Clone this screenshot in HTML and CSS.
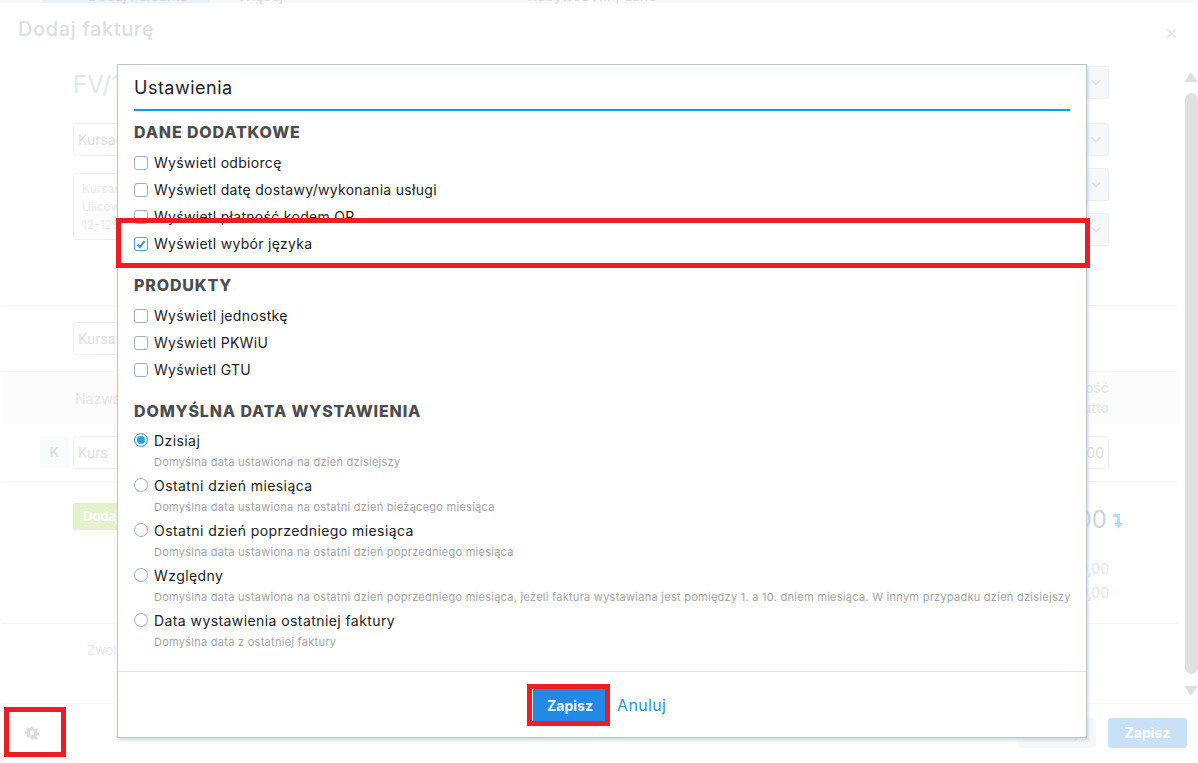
FILE: index.html
```html
<!DOCTYPE html>
<html lang="pl">

<head>
    <meta charset="UTF-8">
    <meta name="viewport" content="width=device-width, initial-scale=1.0">
    <title>Dodaj fakturę</title>
    <link rel="stylesheet" href="styles.css">
</head>

<body>
    <!-- wyszarzona strona pod oknem ustawien -->
    <div class="topbar">
        <span class="top-chip">Dodaj kursanta</span>
        <span class="top-more">Więcej</span>
        <span class="top-buyer">Nabywca NIP, dane</span>
    </div>
    <div class="sheet">
        <div class="sheet-head">
            <h1 class="sheet-title">Dodaj fakturę</h1>
            <span class="sheet-close">×</span>
        </div>
        <div class="sheet-main">
            <div class="scroll-area">
                <div class="row row-number">
                    <span class="invoice-no">FV/1</span>
                    <span class="select"><svg class="chevron" viewBox="0 0 12 8"><path d="M1 1.500l5 5 5-5"/></svg></span>
                </div>
                <div class="row row-seller">
                    <span class="input">Kursant</span>
                    <span class="select"><svg class="chevron" viewBox="0 0 12 8"><path d="M1 1.500l5 5 5-5"/></svg></span>
                </div>
                <div class="row row-address">
                    <div class="address">Kursant<br>Ulicowa<br>12-128</div>
                    <div class="select-stack">
                        <span class="select"><svg class="chevron" viewBox="0 0 12 8"><path d="M1 1.500l5 5 5-5"/></svg></span>
                        <span class="select"><svg class="chevron" viewBox="0 0 12 8"><path d="M1 1.500l5 5 5-5"/></svg></span>
                    </div>
                </div>
                <div class="row row-course">
                    <span class="input">Kursant</span>
                </div>
                <div class="band">
                    <span class="band-name">Nazwa</span>
                    <span class="band-value">Wartość<br>brutto</span>
                </div>
                <div class="row row-item">
                    <div class="item-left">
                        <span class="item-key">K</span>
                        <span class="input input-short">Kurs</span>
                    </div>
                    <span class="input input-amount">0,00</span>
                </div>
                <div class="row row-sum">
                    <span class="add-btn">Dodaj</span>
                    <div class="sum">
                        <div class="sum-total">0,00
                            <svg class="sum-arrow" viewBox="0 0 12 16"><path d="M1 1h7v9h3.500L6.500 15.500 1.500 10H5V4H1z"/></svg>
                        </div>
                        <div class="sum-line">0,00</div>
                        <div class="sum-line">0,00</div>
                    </div>
                </div>
                <div class="row-note">Zwolnienie</div>
            </div>
            <div class="scrollbar">
                <span class="arrow-up"></span>
                <span class="thumb"></span>
                <span class="arrow-down"></span>
            </div>
        </div>
        <div class="sheet-foot">
            <svg class="gear" viewBox="0 0 24 24"><path fill-rule="evenodd" d="M10 1h4l.7 3.300 1.900.8 2.900-1.800 2.800 2.800-1.800 2.900.8 1.900 3.300.7v4l-3.300.7-.8 1.900 1.800 2.900-2.800 2.800-2.900-1.800-1.900.8L14 23h-4l-.7-3.300-1.900-.8-2.900 1.800-2.800-2.800 1.800-2.900-.8-1.900L-.6 14v-4l3.300-.7.8-1.900-1.800-2.900 2.800-2.800 2.900 1.800 1.900-.8zM12 8a4 4 0 1 0 0 8 4 4 0 0 0 0-8z"/></svg>
            <span class="foot-ghost">Anuluj</span>
            <span class="foot-save">Zapisz</span>
        </div>
    </div>

    <!-- okno ustawien -->
    <div class="dialog">
        <div class="dialog-body">
            <h2 class="dialog-title">Ustawienia</h2>

            <h3 class="group">DANE DODATKOWE</h3>
            <label class="check"><span class="box"></span>Wyświetl odbiorcę</label>
            <label class="check"><span class="box"></span>Wyświetl datę dostawy/wykonania usługi</label>
            <label class="check"><span class="box"></span>Wyświetl płatność kodem QR</label>
            <label class="check"><span class="box box-on"><svg viewBox="0 0 14 14"><path d="M3 7.500l3 3 5-7"/></svg></span>Wyświetl wybór języka</label>

            <h3 class="group group-next">PRODUKTY</h3>
            <label class="check"><span class="box"></span>Wyświetl jednostkę</label>
            <label class="check"><span class="box"></span>Wyświetl PKWiU</label>
            <label class="check"><span class="box"></span>Wyświetl GTU</label>

            <h3 class="group group-next">DOMYŚLNA DATA WYSTAWIENIA</h3>
            <div class="radios">
                <div class="radio-item">
                    <label class="radio"><span class="dot dot-on"></span>Dzisiaj</label>
                    <p class="hint">Domyślna data ustawiona na dzień dzisiejszy</p>
                </div>
                <div class="radio-item">
                    <label class="radio"><span class="dot"></span>Ostatni dzień miesiąca</label>
                    <p class="hint">Domyślna data ustawiona na ostatni dzień bieżącego miesiąca</p>
                </div>
                <div class="radio-item">
                    <label class="radio"><span class="dot"></span>Ostatni dzień poprzedniego miesiąca</label>
                    <p class="hint">Domyślna data ustawiona na ostatni dzień poprzedniego miesiąca</p>
                </div>
                <div class="radio-item">
                    <label class="radio"><span class="dot"></span>Względny</label>
                    <p class="hint">Domyślna data ustawiona na ostatni dzień poprzedniego miesiąca, jeżeli faktura wystawiana jest pomiędzy 1. a 10. dniem miesiąca. W innym przypadku dzień dzisiejszy</p>
                </div>
                <div class="radio-item">
                    <label class="radio"><span class="dot"></span>Data wystawienia ostatniej faktury</label>
                    <p class="hint">Domyślna data z ostatniej faktury</p>
                </div>
            </div>
        </div>
        <div class="dialog-foot">
            <button class="btn-save">Zapisz</button>
            <a class="link-cancel">Anuluj</a>
        </div>
    </div>

    <!-- czerwone ramki z instrukcji -->
    <div class="mark mark-lang"></div>
    <div class="mark mark-save"></div>
    <div class="mark mark-gear"></div>
</body>

</html>
```

FILE: styles.css
```css
* {
    padding: 0;
    margin: 0;
    box-sizing: border-box;
}

html,
body {
    width: 1198px;
    height: 763px;
    overflow: hidden;
}

body {
    position: relative;
    background-color: #fff;
    font-family: Inter, "Open Sans", sans-serif;
    color: #222;
}

/* strona pod spodem */
.topbar {
    height: 3px;
    display: flex;
    align-items: flex-end;
    background-color: #f8f8f9;
    font-size: 14px;
    line-height: 14px;
    color: #d5d8dc;
}

.top-chip {
    width: 168px;
    margin-left: 42px;
    padding-left: 46px;
    background-color: #e8f2fb;
    white-space: nowrap;
}

.top-more {
    margin-left: 28px;
    width: 289px;
}

.top-buyer {
    white-space: nowrap;
}

.sheet {
    height: 760px;
    margin-left: 2px;
    display: flex;
    flex-direction: column;
    background-color: #fff;
}

.sheet-head {
    height: 55px;
    padding: 14px 20px 0 16px;
    display: flex;
    justify-content: space-between;
}

.sheet-title {
    font-size: 20px;
    line-height: 24px;
    font-weight: 500;
    letter-spacing: 0.6px;
    color: #dcdfe4;
}

.sheet-close {
    font-size: 20px;
    line-height: 30px;
    color: #e3e5e8;
}

.sheet-main {
    height: 645px;
    display: flex;
}

.scroll-area {
    width: 1177px;
    margin-right: 5px;
    padding: 8px 70px 0 71px;
}

.row {
    display: flex;
    justify-content: space-between;
}

.row-number {
    height: 33px;
}

.row-seller {
    margin-top: 24px;
}

.row-address {
    margin-top: 12px;
    padding-bottom: 59px;
    border-bottom: 1px solid #f5f6f7;
    margin-left: -71px;
    margin-right: -70px;
    padding-left: 71px;
    padding-right: 70px;
}

.row-course {
    margin-top: 16px;
}

.invoice-no {
    font-size: 24px;
    line-height: 38px;
    color: #e5e7e9;
}

.input {
    display: block;
    width: 120px;
    height: 33px;
    padding: 0 4px;
    border: 1px solid #eef0f2;
    border-radius: 3px;
    font-size: 14px;
    line-height: 31px;
    color: #dcdee1;
    background-color: #fff;
}

.select {
    position: relative;
    display: flex;
    align-items: center;
    justify-content: flex-end;
    width: 50px;
    height: 33px;
    padding-right: 7px;
    border: 1px solid #eef1f4;
    border-radius: 3px;
    background-color: #f6f8fa;
}

.chevron {
    width: 10px;
    height: 7px;
    fill: none;
    stroke: #e3e4e6;
    stroke-width: 2;
}

.select-stack {
    display: flex;
    flex-direction: column;
    gap: 12px;
}

.address {
    width: 120px;
    height: 67px;
    margin-top: 5px;
    padding: 6px 8px;
    border: 1px solid #eef0f2;
    border-radius: 3px;
    font-size: 12px;
    line-height: 18px;
    color: #e6e7ea;
}

.band {
    height: 53px;
    margin: 16px -70px 0 -71px;
    padding: 6px 70px 0 73px;
    display: flex;
    justify-content: space-between;
    border-top: 1px solid #f5f6f7;
    background-color: #fcfcfc;
    font-size: 14px;
    font-weight: 500;
    line-height: 20px;
    color: #e6e7e9;
}

.band-name {
    padding-top: 11px;
}

.band-value {
    text-align: right;
}

.row-item {
    margin: 12px -70px 0 -71px;
    padding: 0 70px 12px 38px;
    border-bottom: 1px solid #f5f6f7;
}

.item-left {
    display: flex;
    gap: 4px;
}

.item-key {
    width: 29px;
    height: 31px;
    margin-top: 1px;
    background-color: #f9fafa;
    font-size: 13px;
    font-weight: 700;
    line-height: 31px;
    text-align: center;
    color: #dfe1e3;
}

.input-short {
    width: 100px;
}

.input-amount {
    width: 60px;
    text-align: right;
}

.row-sum {
    margin: 0 -70px 0 -71px;
    padding: 21px 58px 0 71px;
    height: 142px;
    border-bottom: 1px solid #f5f6f7;
}

.add-btn {
    width: 80px;
    height: 27px;
    padding-left: 10px;
    border-radius: 2px;
    background-color: #e3f1cd;
    font-size: 13px;
    font-weight: 700;
    line-height: 27px;
    color: #fff;
}

.sum {
    margin-top: -1px;
    text-align: right;
    color: #e4e5e7;
}

.sum-total {
    display: flex;
    align-items: center;
    justify-content: flex-end;
    gap: 5px;
    height: 34px;
    margin-right: -3px;
    font-size: 24px;
    color: #d2d3d5;
}

.sum-arrow {
    width: 12px;
    height: 16px;
    margin-top: 4px;
    fill: #b5dff3;
}

.sum-line {
    padding-right: 12px;
    font-size: 14px;
    line-height: 24px;
}

.sum-line:nth-child(2) {
    margin-top: 21px;
}

.row-note {
    padding: 16px 0 0 14px;
    font-size: 13px;
    line-height: 20px;
    color: #e6e7e9;
}

.scrollbar {
    width: 14px;
    display: flex;
    flex-direction: column;
    align-items: center;
    padding-top: 14px;
}

.arrow-up,
.arrow-down {
    width: 0;
    height: 0;
    border-left: 7px solid transparent;
    border-right: 7px solid transparent;
}

.arrow-up {
    border-bottom: 10px solid #e0e0e0;
}

.arrow-down {
    margin-top: 12px;
    border-top: 10px solid #e0e0e0;
}

.thumb {
    width: 13px;
    height: 581px;
    margin-top: 11px;
    border-radius: 7px;
    background-color: #e0e0e0;
}

.sheet-foot {
    height: 60px;
    padding: 14px 8px 0 21px;
    display: flex;
    align-items: flex-start;
    border-top: 1px solid #f7f7f8;
}

.gear {
    width: 14px;
    height: 14px;
    margin: 8px 979px 0 2px;
    fill: #dcdcdc;
}

.foot-ghost {
    width: 78px;
    height: 30px;
    border-radius: 3px;
    background-color: #f6f7f9;
    font-size: 14px;
    line-height: 30px;
    text-align: center;
    color: #dcdee1;
}

.foot-save {
    width: 79px;
    height: 30px;
    margin-left: 12px;
    border-radius: 3px;
    background-color: #c8e1f8;
    font-size: 14px;
    font-weight: 700;
    line-height: 30px;
    text-align: center;
    color: #fff;
}

/* okno ustawien */
.dialog {
    position: absolute;
    left: 117px;
    top: 64px;
    width: 970px;
    height: 674px;
    display: flex;
    flex-direction: column;
    border: 1px solid #b8c6d4;
    background-color: #fff;
    box-shadow: 2px 3px 2px rgba(188, 201, 214, 0.5);
}

.dialog-body {
    flex: 1;
    padding: 11px 16px 0;
}

.dialog-title {
    height: 35px;
    border-bottom: 2px solid #0a9bea;
    font-size: 18px;
    font-weight: 400;
    line-height: 24px;
    letter-spacing: 0.5px;
    color: #222;
}

.group {
    margin-top: 9px;
    margin-bottom: 5px;
    font-size: 16px;
    font-weight: 800;
    line-height: 24px;
    letter-spacing: 0.85px;
    color: #4d4d4d;
}

.group-next {
    margin-top: 16px;
}

.check,
.radio {
    display: flex;
    align-items: center;
    gap: 6px;
    font-size: 14px;
    letter-spacing: 0.3px;
    white-space: nowrap;
}

.check {
    height: 27px;
}

.radio {
    height: 24px;
    letter-spacing: 0.42px;
}

.box {
    width: 14px;
    height: 14px;
    flex: none;
    border: 1px solid #9db0c3;
    border-radius: 3px;
    background-color: #fff;
}

.box svg {
    display: block;
    width: 12px;
    height: 12px;
    fill: none;
    stroke: #2f9ae8;
    stroke-width: 2.5;
}

.box-on {
    border-color: #47a6ec;
}

.radios {
    margin-top: 1px;
}

.radio-item {
    height: 45px;
}

.dot {
    width: 14px;
    height: 14px;
    flex: none;
    border: 1px solid #9db0c3;
    border-radius: 50%;
    background-color: #fff;
}

.dot-on {
    border-color: #47a6ec;
    background-color: #2f9ee8;
    box-shadow: inset 0 0 0 2px #fff;
}

.hint {
    padding-left: 20px;
    font-size: 11px;
    line-height: 20px;
    letter-spacing: 0.27px;
    white-space: nowrap;
    color: #a3a3a3;
}

.dialog-foot {
    height: 66px;
    padding: 17px 0 0 415px;
    display: flex;
    align-items: flex-start;
    gap: 10px;
    border-top: 1px solid #e1e5e9;
}

.btn-save {
    width: 74px;
    height: 32px;
    border: none;
    background-color: #2389e6;
    font-family: inherit;
    font-size: 14px;
    font-weight: 700;
    color: #e8f3fd;
}

.link-cancel {
    font-size: 16px;
    line-height: 32px;
    letter-spacing: 0.35px;
    color: #2a96d6;
}

/* czerwone ramki */
.mark {
    position: absolute;
    border: 5px solid #ee1c25;
}

.mark-lang {
    left: 116px;
    top: 218px;
    width: 974px;
    height: 50px;
}

.mark-save {
    left: 527px;
    top: 684px;
    width: 83px;
    height: 42px;
}

.mark-gear {
    left: 4px;
    top: 707px;
    width: 62px;
    height: 50px;
}
```
